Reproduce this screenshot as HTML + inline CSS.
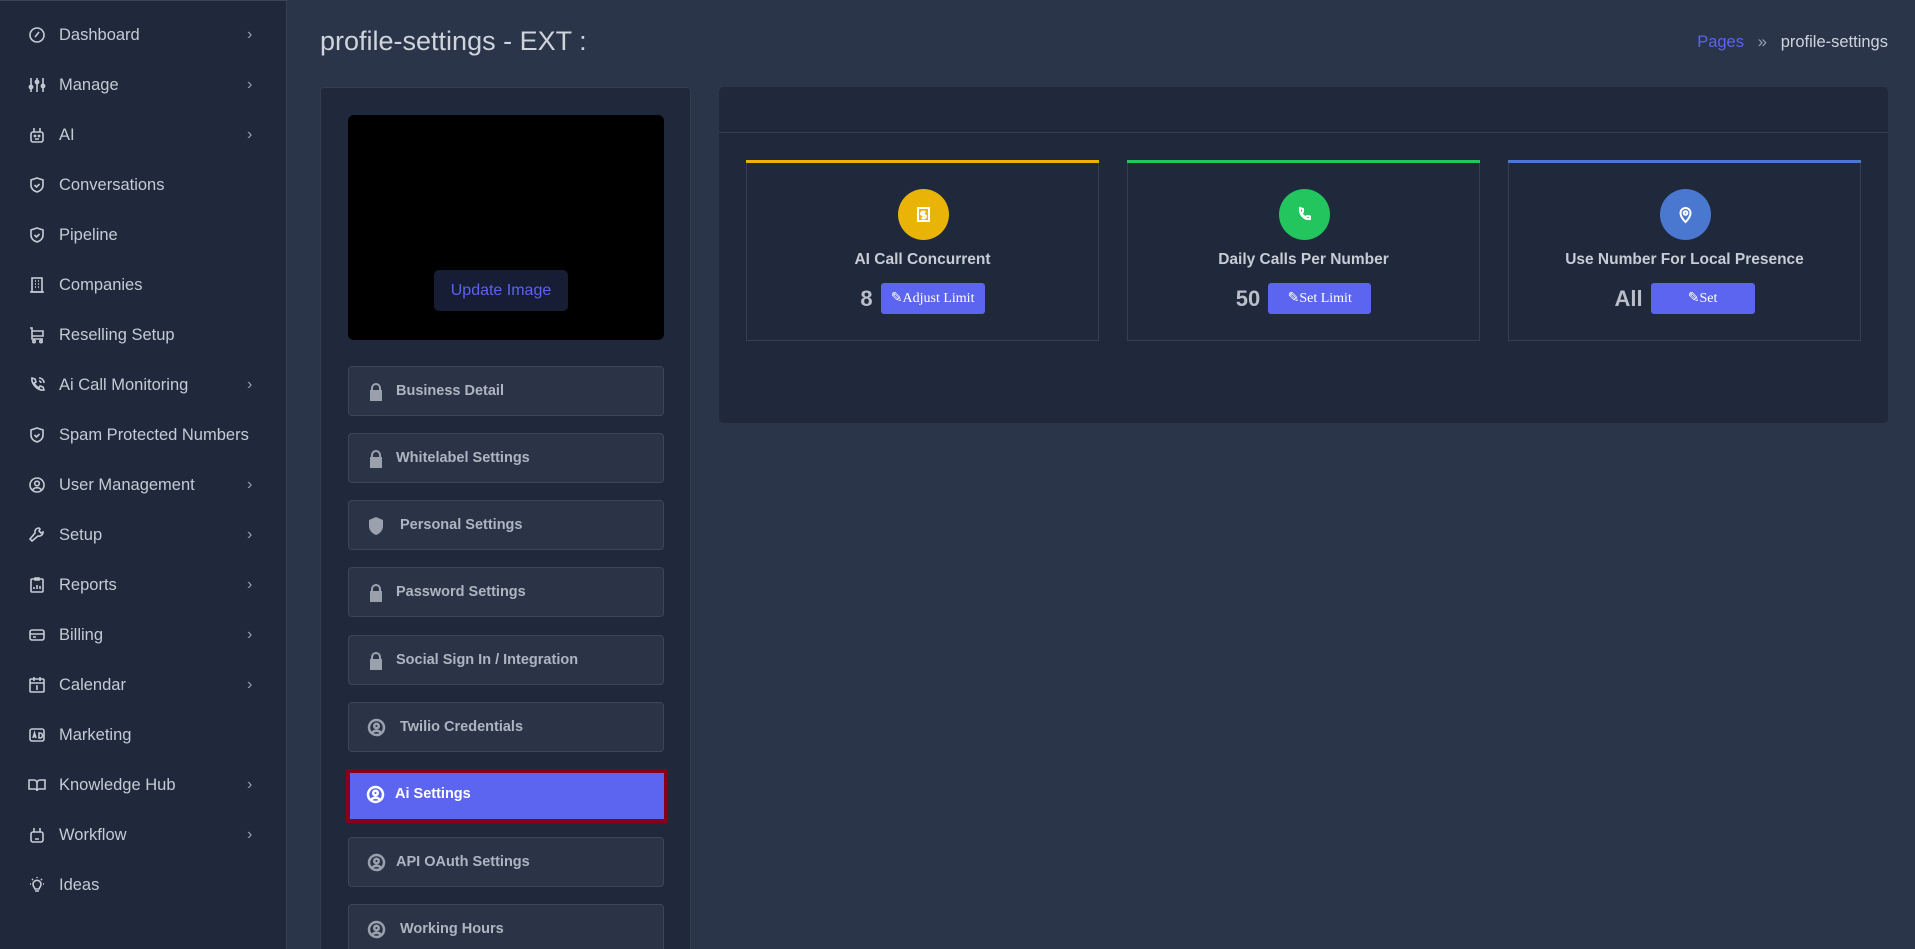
<!DOCTYPE html>
<html><head><meta charset="utf-8"><style>
*{box-sizing:border-box;margin:0;padding:0}
html{overflow:hidden;height:949px}
body{width:1915px;height:949px;overflow:hidden;background:#2a3549;font-family:"Liberation Sans",sans-serif;position:relative}
.side{position:absolute;left:0;top:0;width:287px;height:949px;background:#1f293b;border-right:1px solid #334155;border-top:1px solid #3a4657}
.si{position:absolute;left:0;width:287px;height:30px;color:#c5cbd5;font-size:16.5px;line-height:30px}
.si svg{position:absolute;left:28px;top:6px}
.si span{position:absolute;left:59px}
.si b{position:absolute;left:247px;font-weight:normal;color:#9aa3b0;font-size:16px}
.title{position:absolute;left:320px;top:26px;font-size:27px;color:#cfd4dc}
.bc{position:absolute;right:27px;top:33px;font-size:16.5px;color:#cfd4dc}
.bc .p{color:#5b63f0}
.lc{position:absolute;left:320px;top:87px;width:371px;height:870px;background:#1f293b;border:1px solid #323d50;border-radius:4px}
.img{position:absolute;left:348px;top:115px;width:316px;height:225px;background:#000;border-radius:6px}
.ub{position:absolute;left:434px;top:270px;width:134px;height:41px;background:#181d36;border-radius:5px;color:#5b63f0;font-size:16px;line-height:41px;text-align:center}
.mb{position:absolute;left:348px;width:316px;height:50px;background:#2b3447;border:1px solid #3b4659;border-radius:4px;color:#aeb5c1;font-weight:bold;font-size:14.5px;line-height:48px}
.mb svg{position:absolute;left:18px;top:15px}
.mb span{position:absolute;left:47px}
.mb.act{background:#5b65f0;border:4px solid #86001a;border-radius:0;color:#fff;line-height:42px;left:346px;width:322px;height:54px}
.rp{position:absolute;left:719px;top:87px;width:1169px;height:336px;background:#1f293b;border-radius:5px}
.rp .hl{position:absolute;left:0;right:0;top:45px;border-top:1px solid #333e50}
.card{position:absolute;top:73px;width:353px;height:181px;border:1px solid #343f52;border-top:none}
.card .tb{position:absolute;left:-1px;right:-1px;top:0;height:3px}
.circ{position:absolute;left:151px;top:29px;width:51px;height:51px;border-radius:50%}
.circ svg{position:absolute;left:15px;top:15px}
.ct{position:absolute;left:0;right:0;top:91px;text-align:center;color:#c7ccd5;font-weight:bold;font-size:15.5px}
.vr{position:absolute;left:0;right:0;top:123px;text-align:center;height:31px}
.vr .v{display:inline-block;vertical-align:middle;color:#b9bec8;font-weight:bold;font-size:22px;margin-right:8px}
.vr .btn{display:inline-block;vertical-align:middle;background:#5b65f0;color:#fff;font-family:"Liberation Serif",serif;font-size:14px;height:31px;line-height:31px;border-radius:3px;text-align:center}
</style></head><body>
<div class="side">
<div class="si" style="top:19px"><svg width="18" height="18" viewBox="0 0 18 18" fill="none" stroke="#c5cbd5" stroke-width="1.6"><circle cx="9" cy="9" r="7"/><path d="M7 11l4-5"/></svg><span>Dashboard</span><b>›</b></div>
<div class="si" style="top:69px"><svg width="18" height="18" viewBox="0 0 18 18" fill="none" stroke="#c5cbd5" stroke-width="1.6"><path d="M3 2v14M9 2v14M15 2v14"/><circle cx="3" cy="11" r="1.6"/><circle cx="9" cy="6" r="1.6"/><circle cx="15" cy="10" r="1.6"/></svg><span>Manage</span><b>›</b></div>
<div class="si" style="top:119px"><svg width="18" height="18" viewBox="0 0 18 18" fill="none" stroke="#c5cbd5" stroke-width="1.6"><rect x="3" y="6" width="12" height="10" rx="2"/><path d="M6 6V2M12 6V2M7 13h4"/><circle cx="7" cy="10" r=".6"/><circle cx="11" cy="10" r=".6"/></svg><span>AI</span><b>›</b></div>
<div class="si" style="top:169px"><svg width="18" height="18" viewBox="0 0 18 18" fill="none" stroke="#c5cbd5" stroke-width="1.6"><path d="M9 2l6 2v5c0 4-3 6-6 7-3-1-6-3-6-7V4z"/><path d="M6.5 9l2 2 3-3"/></svg><span>Conversations</span></div>
<div class="si" style="top:219px"><svg width="18" height="18" viewBox="0 0 18 18" fill="none" stroke="#c5cbd5" stroke-width="1.6"><path d="M9 2l6 2v5c0 4-3 6-6 7-3-1-6-3-6-7V4z"/><path d="M6.5 9l2 2 3-3"/></svg><span>Pipeline</span></div>
<div class="si" style="top:269px"><svg width="18" height="18" viewBox="0 0 18 18" fill="none" stroke="#c5cbd5" stroke-width="1.6"><rect x="4" y="2" width="10" height="14"/><path d="M7 5h1M10 5h1M7 8h1M10 8h1M7 11h1M10 11h1M2 16h14"/></svg><span>Companies</span></div>
<div class="si" style="top:319px"><svg width="18" height="18" viewBox="0 0 18 18" fill="none" stroke="#c5cbd5" stroke-width="1.6"><path d="M2 2h2v11h11M4 5h11v5H4"/><circle cx="6" cy="15.5" r="1.2"/><circle cx="13" cy="15.5" r="1.2"/></svg><span>Reselling Setup</span></div>
<div class="si" style="top:369px"><svg width="18" height="18" viewBox="0 0 18 18" fill="none" stroke="#c5cbd5" stroke-width="1.6"><path d="M4 2l3 1 1 3-2 1c1 2 3 4 5 5l1-2 3 1 1 3c-6 1-13-6-12-12z"/><path d="M11 2a5 5 0 015 5M11 5a2 2 0 012 2"/></svg><span>Ai Call Monitoring</span><b>›</b></div>
<div class="si" style="top:419px"><svg width="18" height="18" viewBox="0 0 18 18" fill="none" stroke="#c5cbd5" stroke-width="1.6"><path d="M9 2l6 2v5c0 4-3 6-6 7-3-1-6-3-6-7V4z"/><path d="M6.5 9l2 2 3-3"/></svg><span>Spam Protected Numbers</span></div>
<div class="si" style="top:469px"><svg width="18" height="18" viewBox="0 0 18 18" fill="none" stroke="#c5cbd5" stroke-width="1.6"><circle cx="9" cy="9" r="7"/><circle cx="9" cy="7.5" r="2.3"/><path d="M4.5 14c2-3 7-3 9 0"/></svg><span>User Management</span><b>›</b></div>
<div class="si" style="top:519px"><svg width="18" height="18" viewBox="0 0 18 18" fill="none" stroke="#c5cbd5" stroke-width="1.6"><path d="M11 2a4 4 0 00-4 5l-5 6 2 2 6-5a4 4 0 005-4l-2 1-2-2 1-2z"/></svg><span>Setup</span><b>›</b></div>
<div class="si" style="top:569px"><svg width="18" height="18" viewBox="0 0 18 18" fill="none" stroke="#c5cbd5" stroke-width="1.6"><rect x="3" y="3" width="12" height="13" rx="1"/><path d="M7 2h4v2H7zM6 13v-2M9 13V9M12 13v-3"/></svg><span>Reports</span><b>›</b></div>
<div class="si" style="top:619px"><svg width="18" height="18" viewBox="0 0 18 18" fill="none" stroke="#c5cbd5" stroke-width="1.6"><rect x="2" y="4" width="14" height="10" rx="2"/><path d="M2 8h14M5 11h3"/></svg><span>Billing</span><b>›</b></div>
<div class="si" style="top:669px"><svg width="18" height="18" viewBox="0 0 18 18" fill="none" stroke="#c5cbd5" stroke-width="1.6"><rect x="2" y="3" width="14" height="13" rx="1"/><path d="M2 7h14M6 1v4M12 1v4M8 10h1v4"/></svg><span>Calendar</span><b>›</b></div>
<div class="si" style="top:719px"><svg width="18" height="18" viewBox="0 0 18 18" fill="none" stroke="#c5cbd5" stroke-width="1.6"><rect x="2" y="3" width="14" height="12" rx="2"/><path d="M5 12l1.5-5 1.5 5M5.5 10.5h2M11 7v5h1a2 2 0 000-5z"/></svg><span>Marketing</span></div>
<div class="si" style="top:769px"><svg width="18" height="18" viewBox="0 0 18 18" fill="none" stroke="#c5cbd5" stroke-width="1.6"><path d="M1 4h5a3 3 0 013 3v8a2 2 0 00-2-2H1zM17 4h-5a3 3 0 00-3 3v8a2 2 0 012-2h6z"/></svg><span>Knowledge Hub</span><b>›</b></div>
<div class="si" style="top:819px"><svg width="18" height="18" viewBox="0 0 18 18" fill="none" stroke="#c5cbd5" stroke-width="1.6"><rect x="3" y="6" width="12" height="10" rx="2"/><path d="M6 6V2M12 6V2M7 13h4"/></svg><span>Workflow</span><b>›</b></div>
<div class="si" style="top:869px"><svg width="18" height="18" viewBox="0 0 18 18" fill="none" stroke="#c5cbd5" stroke-width="1.6"><path d="M6 11a4 4 0 116 0l-1 2H7zM7 15h4M9 1v1M2 8h1M15 8h1M4 3l1 1M14 3l-1 1"/></svg><span>Ideas</span></div>
</div>
<div class="title">profile-settings - EXT :</div>
<div class="bc"><span class="p">Pages</span> &nbsp;&nbsp;<span style="color:#9aa3b0">»</span>&nbsp;&nbsp; profile-settings</div>
<div class="lc"></div>
<div class="img"></div>
<div class="ub">Update Image</div>
<div class="mb" style="top:366px"><svg width="18" height="20" viewBox="0 0 18 20" fill="#9aa1ad"><path d="M4 8V6a5 5 0 0110 0v2h1v11H3V8zm2 0h6V6a3 3 0 00-6 0z"/></svg><span>Business Detail</span></div>
<div class="mb" style="top:433px"><svg width="18" height="20" viewBox="0 0 18 20" fill="#9aa1ad"><path d="M4 8V6a5 5 0 0110 0v2h1v11H3V8zm2 0h6V6a3 3 0 00-6 0z"/></svg><span>Whitelabel Settings</span></div>
<div class="mb" style="top:500px"><svg width="18" height="20" viewBox="0 0 18 20" fill="#9aa1ad"><path d="M9 1l7 3v6c0 5-4 8-7 9-3-1-7-4-7-9V4z"/></svg><span style="left:51px">Personal Settings</span></div>
<div class="mb" style="top:567px"><svg width="18" height="20" viewBox="0 0 18 20" fill="#9aa1ad"><path d="M4 8V6a5 5 0 0110 0v2h1v11H3V8zm2 0h6V6a3 3 0 00-6 0z"/></svg><span>Password Settings</span></div>
<div class="mb" style="top:635px"><svg width="18" height="20" viewBox="0 0 18 20" fill="#9aa1ad"><path d="M4 8V6a5 5 0 0110 0v2h1v11H3V8zm2 0h6V6a3 3 0 00-6 0z"/></svg><span>Social Sign In / Integration</span></div>
<div class="mb" style="top:702px"><svg width="19" height="19" viewBox="0 0 19 19" fill="none" stroke="#9aa1ad" stroke-width="2.5"><circle cx="9.5" cy="9.5" r="7.5"/><circle cx="9.5" cy="8" r="2.3"/><path d="M5 15c2-3 7-3 9 0"/></svg><span style="left:51px">Twilio Credentials</span></div>
<div class="mb act" style="top:769px"><svg width="19" height="19" viewBox="0 0 19 19" fill="none" stroke="#fff" stroke-width="2.5" style="left:16px;top:12px"><circle cx="9.5" cy="9.5" r="7.5"/><circle cx="9.5" cy="8" r="2.3"/><path d="M5 15c2-3 7-3 9 0"/></svg><span style="left:45px">Ai Settings</span></div>
<div class="mb" style="top:837px"><svg width="19" height="19" viewBox="0 0 19 19" fill="none" stroke="#9aa1ad" stroke-width="2.5"><circle cx="9.5" cy="9.5" r="7.5"/><circle cx="9.5" cy="8" r="2.3"/><path d="M5 15c2-3 7-3 9 0"/></svg><span>API OAuth Settings</span></div>
<div class="mb" style="top:904px"><svg width="19" height="19" viewBox="0 0 19 19" fill="none" stroke="#9aa1ad" stroke-width="2.5"><circle cx="9.5" cy="9.5" r="7.5"/><circle cx="9.5" cy="8" r="2.3"/><path d="M5 15c2-3 7-3 9 0"/></svg><span style="left:51px">Working Hours</span></div>
<div class="rp"><div class="hl"></div>
<div class="card" style="left:27px"><div class="tb" style="background:#eab308"></div><div class="circ" style="background:#eab308"><svg width="21" height="21" viewBox="0 0 21 21" fill="none" stroke="#fff" stroke-width="2"><rect x="5" y="4" width="11" height="13"/><path d="M12.5 8h-3a1 1 0 000 3h2a1 1 0 010 3h-3M10.5 6.5v9"/></svg></div><div class="ct">AI Call Concurrent</div><div class="vr"><span class="v">8</span><span class="btn" style="width:104px">✎Adjust Limit</span></div></div>
<div class="card" style="left:408px"><div class="tb" style="background:#22c55e"></div><div class="circ" style="background:#22c55e"><svg width="21" height="21" viewBox="0 0 21 21" fill="none" stroke="#fff" stroke-width="2"><path d="M6 4l3 1 0 3-1.5 1c1 2 2.5 3.5 4.5 4.5L13 12l3 .5V15c-6 1-11-5-10-11z"/></svg></div><div class="ct">Daily Calls Per Number</div><div class="vr"><span class="v">50</span><span class="btn" style="width:103px">✎Set Limit</span></div></div>
<div class="card" style="left:789px"><div class="tb" style="background:#4a78d0"></div><div class="circ" style="background:#4a78d0"><svg width="21" height="21" viewBox="0 0 21 21" fill="none" stroke="#fff" stroke-width="2"><path d="M10.5 18s-5-4.5-5-9a5 5 0 0110 0c0 4.5-5 9-5 9z"/><circle cx="10.5" cy="9" r="1.8"/></svg></div><div class="ct">Use Number For Local Presence</div><div class="vr"><span class="v">All</span><span class="btn" style="width:104px">✎Set</span></div></div>
</div>
</body></html>
